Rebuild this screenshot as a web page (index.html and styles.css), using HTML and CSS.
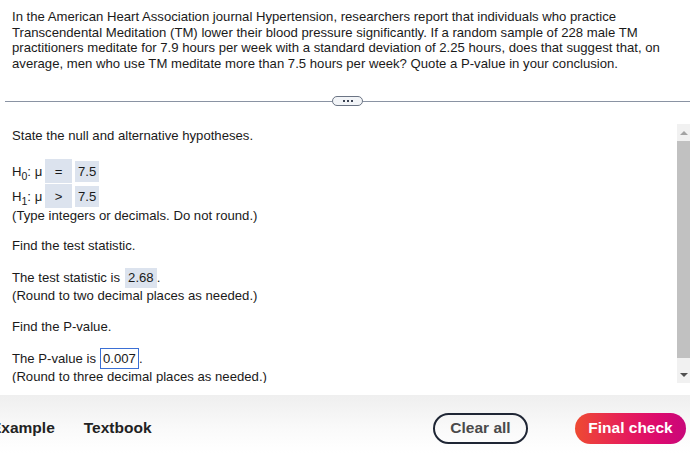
FILE: index.html
```html
<!DOCTYPE html>
<html>
<head>
<meta charset="utf-8">
<link rel="stylesheet" href="styles.css">
</head>
<body>
<div class="page">
  <div class="question">In the American Heart Association journal Hypertension, researchers report that individuals who practice Transcendental Meditation (TM) lower their blood pressure significantly. If a random sample of 228 male TM practitioners meditate for 7.9 hours per week with a standard deviation of 2.25 hours, does that suggest that, on average, men who use TM meditate more than 7.5 hours per week? Quote a P-value in your conclusion.</div>

  <div class="divider">
    <div class="rule"></div>
    <div class="pill"><span class="dot"></span><span class="dot"></span><span class="dot"></span></div>
    <div class="rule"></div>
  </div>

  <div class="work">
    <div class="work-content">
      <p class="line first">State the null and alternative hypotheses.</p>
      <div class="hyps">
        <div class="hyp"><span class="hlabel">H<sub>0</sub>: μ</span><span class="op">=</span><span class="ans">7.5</span></div>
        <div class="hyp"><span class="hlabel">H<sub>1</sub>: μ</span><span class="op">&gt;</span><span class="ans">7.5</span></div>
      </div>
      <p class="line hint">(Type integers or decimals. Do not round.)</p>
      <p class="line gap-a">Find the test statistic.</p>
      <p class="line boxed gap-b">The test statistic is <span class="ans filled">2.68</span>.</p>
      <p class="line hint">(Round to two decimal places as needed.)</p>
      <p class="line gap-c">Find the P-value.</p>
      <p class="line boxed gap-d">The P-value is <span class="ans active">0.007</span>.</p>
      <p class="line hint">(Round to three decimal places as needed.)</p>
    </div>
    <div class="scrollbar">
      <div class="sb-btn"><span class="tri up"></span></div>
      <div class="sb-track"><div class="sb-thumb"></div></div>
      <div class="sb-btn"><span class="tri down"></span></div>
    </div>
  </div>

  <div class="footer">
    <div class="links">
      <span class="link example">Example</span>
      <span class="link">Textbook</span>
    </div>
    <div class="actions">
      <button class="btn clear">Clear all</button>
      <button class="btn final">Final check</button>
    </div>
  </div>
</div>
</body>
</html>
```

FILE: styles.css
```css
* { box-sizing: border-box; }
html, body {
  margin: 0;
  padding: 0;
  background: #fff;
}
body {
  font-family: "Liberation Sans", Arial, sans-serif;
  font-size: 13.15px;
  color: #1a1a1a;
  width: 690px;
  height: 453px;
  overflow: hidden;
}
.page {
  display: flex;
  flex-direction: column;
  height: 453px;
}
.question {
  padding: 9px 12px 0 12px;
  line-height: 15.7px;
  height: 96px;
}
.divider {
  display: flex;
  align-items: center;
  height: 10px;
  padding-left: 5px;
}
.rule {
  flex: 1;
  height: 1px;
  background: #8a93a3;
}
.pill {
  width: 31px;
  height: 10px;
  border: 1.5px solid #6b7484;
  border-radius: 5px;
  background: #f2f4f7;
  display: flex;
  align-items: center;
  justify-content: center;
  gap: 2px;
}
.dot {
  width: 2px;
  height: 2px;
  background: #3b4252;
}
.work {
  margin-top: 18px;
  height: 259px;
  display: flex;
}
.work-content {
  flex: 1;
  overflow: hidden;
  padding: 4px 12px 0 12px;
}
.line {
  margin: 0;
  line-height: 16px;
  white-space: nowrap;
}
.line.gap-a { margin-top: 14px; }
.line.gap-b { margin-top: 13px; }
.line.gap-c { margin-top: 15px; }
.line.gap-d { margin-top: 13px; }
.line.boxed {
  line-height: 21px;
  display: flex;
  align-items: center;
}
.hint { color: #1a1a1a; }
.hyps {
  margin-top: 15px;
  display: flex;
  flex-direction: column;
  gap: 1px;
}
.hyp {
  display: flex;
  align-items: center;
  height: 24px;
}
.hlabel {
  width: 33px;
}
.hlabel sub {
  font-size: 10.5px;
  vertical-align: -4px;
  line-height: 0;
}
.op {
  width: 27px;
  height: 24px;
  background: #dce3ee;
  display: flex;
  align-items: center;
  justify-content: center;
  margin-right: 3px;
}
.ans {
  display: inline-flex;
  align-items: center;
  padding: 0 3px;
  height: 21px;
  background: #dce3ee;
}
.ans.filled {
  height: 20px;
  margin-left: 5px;
}
.ans.active {
  background: #fff;
  border: 1px solid #3b6fd4;
  height: 21px;
  margin-left: 4px;
  padding: 0 2px;
}
.scrollbar {
  width: 13px;
  display: flex;
  flex-direction: column;
  background: #f1f1f1;
}
.sb-btn {
  height: 17px;
  display: flex;
  align-items: center;
  justify-content: center;
}
.sb-track {
  flex: 1;
  display: flex;
  flex-direction: column;
}
.sb-thumb {
  height: 217px;
  background: #c1c1c1;
}
.tri {
  width: 0;
  height: 0;
  border-left: 4px solid transparent;
  border-right: 4px solid transparent;
}
.tri.up { border-bottom: 4px solid #a3a3a3; }
.tri.down { border-top: 4px solid #505050; }
.footer {
  margin-top: 12px;
  flex: 1;
  display: flex;
  align-items: center;
  justify-content: space-between;
  background: linear-gradient(180deg, #efefef 0%, #fafafa 60%, #ffffff 100%);
  padding-top: 8px;
}
.links {
  display: flex;
  gap: 29px;
  margin-left: -9px;
}
.link {
  font-size: 15.5px;
  font-weight: bold;
  color: #222;
}
.actions {
  display: flex;
  align-items: center;
  gap: 47px;
  margin-right: 4px;
}
.btn {
  font-family: "Liberation Sans", Arial, sans-serif;
  font-size: 15.5px;
  font-weight: bold;
  height: 31px;
  border-radius: 16px;
  padding: 0;
  cursor: pointer;
}
.btn.clear {
  width: 95px;
  border: 2px solid #1f2635;
  background: transparent;
  color: #4a4a4a;
}
.btn.final {
  width: 111px;
  border: none;
  color: #fff;
  background: linear-gradient(90deg, #ee4a32 0%, #e61e5a 45%, #dc0a6e 75%, #c8087a 100%);
}
```
